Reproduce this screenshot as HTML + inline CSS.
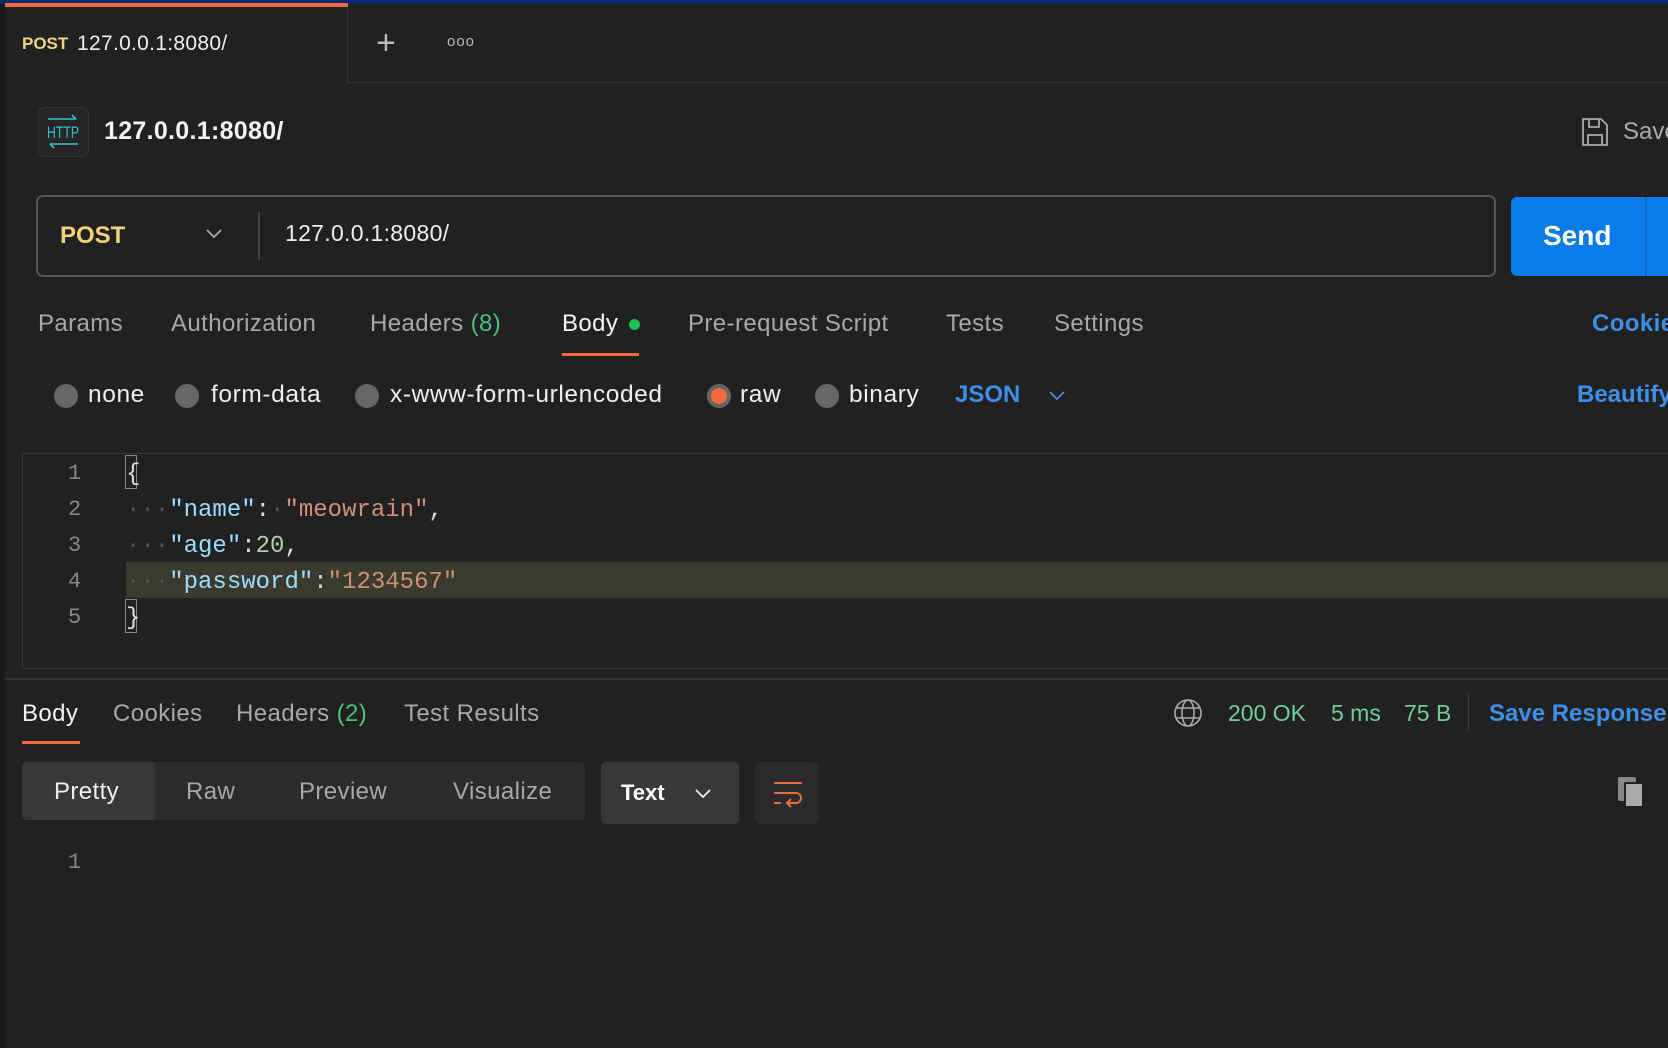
<!DOCTYPE html>
<html><head><meta charset="utf-8"><style>
*{margin:0;padding:0;box-sizing:border-box}
body{width:1668px;height:1048px;background:#212121;font-family:"Liberation Sans",sans-serif;color:#a8a8a8;position:relative;overflow:hidden}
.a{position:absolute;white-space:nowrap}
.mono{font-family:"Liberation Mono",monospace}
.t{font-size:24px;letter-spacing:0.4px}
.r{font-size:24.5px;letter-spacing:0.6px;color:#eee}
</style></head><body>
<div class="a" style="left:0;top:0;width:1668px;height:4px;background:#0b2a6e"></div>
<div class="a" style="left:0;top:4px;width:5px;height:1044px;background:#1a1a1a"></div>
<div class="a" style="left:348px;top:82px;width:1320px;height:1px;background:#333"></div>
<div class="a" style="left:5px;top:3px;width:343px;height:80px;background:#212121;border-right:1px solid #333"></div>
<div class="a" style="left:5px;top:3px;width:343px;height:4px;background:#f06a3a"></div>
<div class="a" style="left:22px;top:34px;font-size:17px;font-weight:bold;color:#f2d27c">POST</div>
<div class="a" style="left:77px;top:32px;font-size:21px;color:#eee;letter-spacing:0.3px">127.0.0.1:8080/</div>
<div class="a" style="left:376px;top:26px;font-size:34px;font-weight:200;color:#bbb;line-height:34px">+</div>
<div class="a" style="left:447px;top:33px;font-size:15px;color:#bbb;letter-spacing:1px">ooo</div>

<div class="a" style="left:38px;top:107px;width:51px;height:50px;border-radius:7px;background:#262626;border:1px solid #333"></div>
<svg class="a" style="left:44px;top:113px" width="40" height="38" viewBox="0 0 40 38"><g stroke="#3bc0c8" stroke-width="1.6" fill="none"><path d="M4 6H32M28 2L32 6"/><path d="M6 31H34M10 35L6 31"/></g><text x="19" y="25" fill="#3bc0c8" font-size="17" font-family="Liberation Sans" text-anchor="middle" textLength="32" lengthAdjust="spacingAndGlyphs">HTTP</text></svg>
<div class="a" style="left:104px;top:117px;font-size:25px;font-weight:bold;color:#f2f2f2;letter-spacing:0.3px">127.0.0.1:8080/</div>
<svg class="a" style="left:1581px;top:117px" width="28" height="30" viewBox="0 0 28 30"><g stroke="#aaa" stroke-width="1.8" fill="none"><path d="M2 2H20L26 8V28H2Z"/><path d="M8 2V10H18V2"/><path d="M7 28V18H21V28"/></g></svg>
<div class="a" style="left:1623px;top:118px;font-size:24px;color:#aaa">Save</div>

<div class="a" style="left:36px;top:195px;width:1460px;height:82px;border:2px solid #555;border-radius:7px"></div>
<div class="a" style="left:60px;top:222px;font-size:24px;font-weight:bold;color:#f2d27c">POST</div>
<svg class="a" style="left:205px;top:228px" width="18" height="12"><path d="M2 2L9 9L16 2" stroke="#aaa" stroke-width="1.8" fill="none"/></svg>
<div class="a" style="left:258px;top:212px;width:2px;height:48px;background:#444"></div>
<div class="a" style="left:285px;top:220px;font-size:23px;color:#eee;letter-spacing:0.3px">127.0.0.1:8080/</div>
<div class="a" style="left:1511px;top:197px;width:170px;height:79px;background:#0b7be9;border-radius:6px"></div>
<div class="a" style="left:1645px;top:197px;width:2px;height:79px;background:#0a66c2"></div>
<div class="a" style="left:1543px;top:220px;font-size:28px;font-weight:bold;color:#fff">Send</div>

<div class="a t" style="left:38px;top:310px">Params</div>
<div class="a t" style="left:171px;top:310px">Authorization</div>
<div class="a t" style="left:370px;top:310px">Headers <span style="color:#4cc17c">(8)</span></div>
<div class="a t" style="left:562px;top:310px;color:#f2f2f2">Body</div>
<div class="a" style="left:629px;top:319px;width:11px;height:11px;border-radius:50%;background:#1fbf55"></div>
<div class="a" style="left:562px;top:353px;width:77px;height:3px;background:#f06a3a"></div>
<div class="a t" style="left:688px;top:310px">Pre-request Script</div>
<div class="a t" style="left:946px;top:310px">Tests</div>
<div class="a t" style="left:1054px;top:310px">Settings</div>
<div class="a t" style="left:1592px;top:310px;font-weight:bold;color:#3d8fe8">Cookies</div>

<div class="a" style="left:54px;top:384px;width:24px;height:24px;border-radius:50%;background:#666"></div>
<div class="a r" style="left:88px;top:381px">none</div>
<div class="a" style="left:175px;top:384px;width:24px;height:24px;border-radius:50%;background:#666"></div>
<div class="a r" style="left:211px;top:381px">form-data</div>
<div class="a" style="left:355px;top:384px;width:24px;height:24px;border-radius:50%;background:#666"></div>
<div class="a r" style="left:390px;top:381px">x-www-form-urlencoded</div>
<div class="a" style="left:707px;top:384px;width:24px;height:24px;border-radius:50%;background:#f06a3a;border:4px solid #666"></div>
<div class="a r" style="left:740px;top:381px">raw</div>
<div class="a" style="left:815px;top:384px;width:24px;height:24px;border-radius:50%;background:#666"></div>
<div class="a r" style="left:849px;top:381px">binary</div>
<div class="a" style="left:955px;top:381px;font-size:24px;font-weight:bold;color:#3d8fe8">JSON</div>
<svg class="a" style="left:1048px;top:390px" width="18" height="12"><path d="M2 2L9 9L16 2" stroke="#3d8fe8" stroke-width="1.8" fill="none"/></svg>
<div class="a" style="left:1577px;top:381px;font-size:24px;font-weight:bold;color:#3d8fe8">Beautify</div>

<div class="a" style="left:22px;top:453px;width:1660px;height:216px;border:1px solid #383838;border-radius:3px"></div>
<div class="a" style="left:126px;top:562px;width:1542px;height:36px;background:#3a3a2f"></div>
<div class="a mono" style="left:68px;top:456px;font-size:22px;line-height:36px;color:#888">1<br>2<br>3<br>4<br>5</div>
<div class="a" style="left:125px;top:455px;width:12px;height:34px;border:1px solid #888"></div>
<div class="a" style="left:125px;top:599px;width:12px;height:34px;border:1px solid #888"></div>
<div class="a mono" style="left:126px;top:457px;font-size:24px;line-height:36px;color:#ddd"><span>{</span><br><span style="color:#555">···</span><span style="color:#9cdcfe">"name"</span>:<span style="color:#555">·</span><span style="color:#ce9178">"meowrain"</span>,<br><span style="color:#555">···</span><span style="color:#9cdcfe">"age"</span>:<span style="color:#b5cea8">20</span>,<br><span style="color:#555">···</span><span style="color:#9cdcfe">"password"</span>:<span style="color:#ce9178">"1234567"</span><br>}</div>

<div class="a" style="left:5px;top:678px;width:1663px;height:2px;background:#333"></div>
<div class="a t" style="left:22px;top:700px;color:#f2f2f2">Body</div>
<div class="a" style="left:22px;top:741px;width:58px;height:3px;background:#f06a3a"></div>
<div class="a t" style="left:113px;top:700px">Cookies</div>
<div class="a t" style="left:236px;top:700px">Headers <span style="color:#4cc17c">(2)</span></div>
<div class="a t" style="left:404px;top:700px">Test Results</div>
<svg class="a" style="left:1173px;top:698px" width="30" height="30" viewBox="0 0 30 30"><g stroke="#aaa" stroke-width="1.6" fill="none"><circle cx="15" cy="15" r="13"/><ellipse cx="15" cy="15" rx="6" ry="13"/><path d="M3 10H27M3 20H27"/></g></svg>
<div class="a" style="left:1228px;top:700px;font-size:23px;color:#6fcf97">200 OK</div>
<div class="a" style="left:1331px;top:700px;font-size:23px;color:#6fcf97">5 ms</div>
<div class="a" style="left:1404px;top:700px;font-size:23px;color:#6fcf97">75 B</div>
<div class="a" style="left:1468px;top:692px;width:1px;height:40px;background:#3a3a3a"></div>
<div class="a" style="left:1489px;top:700px;font-size:24px;font-weight:bold;color:#3d8fe8">Save Response</div>

<div class="a" style="left:22px;top:762px;width:563px;height:58px;background:#2b2b2b;border-radius:5px"></div>
<div class="a" style="left:22px;top:762px;width:133px;height:58px;background:#383838;border-radius:5px 0 0 5px"></div>
<div class="a t" style="left:54px;top:778px;color:#eee">Pretty</div>
<div class="a t" style="left:186px;top:778px">Raw</div>
<div class="a t" style="left:299px;top:778px">Preview</div>
<div class="a t" style="left:453px;top:778px">Visualize</div>
<div class="a" style="left:601px;top:762px;width:138px;height:62px;background:#383838;border-radius:5px"></div>
<div class="a" style="left:621px;top:780px;font-size:22px;font-weight:bold;color:#fff">Text</div>
<svg class="a" style="left:694px;top:788px" width="18" height="12"><path d="M2 2L9 9L16 2" stroke="#eee" stroke-width="1.8" fill="none"/></svg>
<div class="a" style="left:755px;top:762px;width:64px;height:62px;background:#2b2b2b;border-radius:5px"></div>
<svg class="a" style="left:772px;top:780px" width="32" height="30" viewBox="0 0 32 30"><g stroke="#f06a3a" stroke-width="2" fill="none"><path d="M2 3H30"/><path d="M2 13H24a5 5 0 0 1 0 10H16M19 19L15 23L19 27"/><path d="M2 23H9"/></g></svg>
<div class="a" style="left:1618px;top:777px;width:18px;height:24px;background:#888;border-radius:2px"></div>
<div class="a" style="left:1624px;top:782px;width:20px;height:26px;background:#aaa;border-radius:2px;border:2px solid #212121"></div>
<div class="a mono" style="left:68px;top:850px;font-size:22px;color:#888">1</div>
</body></html>
